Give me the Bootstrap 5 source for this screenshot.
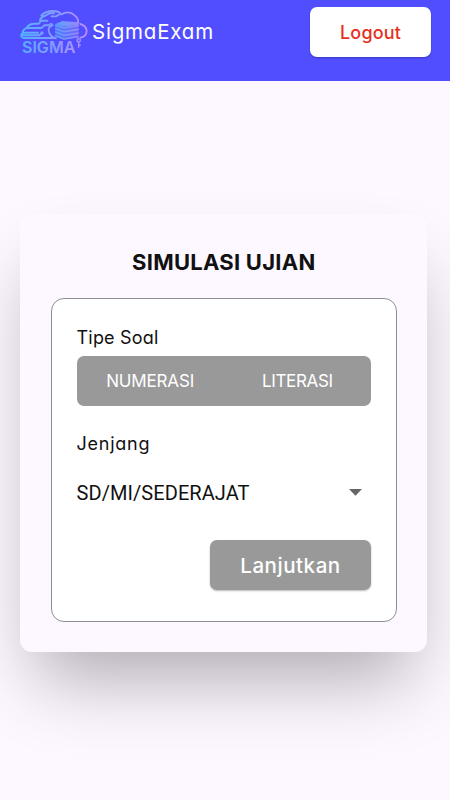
<!DOCTYPE html>
<html lang="id">
<head>
<meta charset="utf-8">
<meta name="viewport" content="width=device-width, initial-scale=1">
<title>SigmaExam</title>
<link href="https://cdn.jsdelivr.net/npm/bootstrap@5.3.0/dist/css/bootstrap.min.css" rel="stylesheet">
<style>
  body { background: #fdf7ff; font-family: Inter, "Open Sans", sans-serif; font-feature-settings: "cv11"; color: #111; height: 800px; overflow: hidden; }
  .topbar { height: 80.5px; background: #504eff; padding: 7px 19px 0 20px; }
  .brand-name { font-size: 20.5px; line-height: 50px; letter-spacing: .8px; margin-left: 4px; }
  .btn-flat { height: 50px; border: 0; border-radius: 7px; box-shadow: 0 1px 2px rgba(0,0,0,.28); }
  .btn-logout { width: 121px; background: #fff; color: #e5301f; font-size: 18px; font-weight: 500; letter-spacing: .15px; }
  .panel { margin: 133px 23px 0 20px; height: 438.5px; padding: 31.5px 30px 30px 30.5px; border-radius: 12px; background: #fdf7ff; box-shadow: 0 42px 70px -16px rgba(0,0,0,.31); }
  .panel-title { font-size: 22px; line-height: 35px; font-weight: 700; letter-spacing: .25px; margin: 0 0 17.5px; }
  .box { height: 324px; border: 1.3px solid #8f8f93; border-radius: 13px; background: #fff; padding: 25px 25px 0 25px; }
  .field-label { font-size: 18px; line-height: 28px; letter-spacing: .2px; }
  .field-label-wide { letter-spacing: .75px; }
  .types { height: 50px; border-radius: 7px; background: #999; font-size: 17px; margin: 4px 0 24px; padding-top: 2px; }
  .type-a { letter-spacing: -.15px; }
  .type-b { letter-spacing: -.35px; }
  .level { font: 400 20px/28px Roboto, sans-serif; letter-spacing: .07px; margin-top: 21px; padding-right: 9px; }
  .btn-next { width: 161px; margin-top: 33.5px; background: #999; color: #fff; font-size: 20.5px; font-weight: 500; letter-spacing: .55px; line-height: 52px; }
</style>
<script src="https://cdn.jsdelivr.net/npm/bootstrap@5.3.0/dist/js/bootstrap.bundle.min.js"></script>
</head>
<body>
<header class="topbar d-flex justify-content-between align-items-start">
  <div class="d-flex text-white">
    <svg width="68" height="54" viewBox="30 21 204 162" fill="none" stroke="url(#g)" stroke-width="6" stroke-linecap="round" stroke-linejoin="round">
      <defs>
        <linearGradient id="g" gradientUnits="userSpaceOnUse" x1="30" y1="0" x2="232" y2="0"><stop offset="0" stop-color="#52b2ff"/><stop offset=".5" stop-color="#829cff"/><stop offset="1" stop-color="#c08cff"/></linearGradient>
        <linearGradient id="b" gradientUnits="userSpaceOnUse" x1="134" y1="0" x2="208" y2="0"><stop offset="0" stop-color="#57a4fb"/><stop offset="1" stop-color="#9a86fb"/></linearGradient>
      </defs>
      <path d="M130 114H42Q32 113 34 104Q36 98 47 98H84M38 96Q43 84 54 84H94L104 76H118M50 83Q57 71 75 71H86L94 62H112M36 106H88L94 101M90 60Q94 49 106 47L118 40H132M94 46Q112 28 144 35L150 39"/>
      <path d="M124 49H138L150 42M128 75Q110 82 118 99Q124 112 138 115M154 43Q177 30 194 46Q206 56 204 66M211 72Q229 77 230 93Q229 110 212 113" stroke-width="5.5"/>
      <circle cx="123" cy="75" r="4" stroke-width="4"/><circle cx="96" cy="99" r="3" stroke-width="4"/>
      <path d="M135 73L157 63L209 67L205 74L162 80Z" fill="url(#b)" stroke="none"/>
      <path d="M136 74V108L162 118L205 111V74L162 81Z" fill="url(#b)" fill-opacity=".45" stroke="none"/>
      <path d="M137 76L162 84L205 77M137 86L162 95L205 88M137 96L162 106L205 99M137 107L162 117L205 110" stroke="url(#b)" stroke-width="5"/>
      <circle cx="206" cy="121" r="5" stroke-width="4"/><path d="M206 128V142M206 137L211 135" stroke-width="4"/>
      <text x="36" y="158" textLength="160" lengthAdjust="spacingAndGlyphs" font-family="Inter, sans-serif" font-size="48" font-weight="600" fill="url(#g)" stroke="none">SIGMA</text>
    </svg>
    <span class="brand-name">SigmaExam</span>
  </div>
  <button class="btn btn-flat btn-logout p-0">Logout</button>
</header>
<main class="panel">
  <h1 class="panel-title text-center">SIMULASI UJIAN</h1>
  <section class="box">
    <div class="field-label">Tipe Soal</div>
    <div class="types d-flex text-white text-center align-items-center">
      <div class="col-6 type-a">NUMERASI</div>
      <div class="col-6 type-b">LITERASI</div>
    </div>
    <div class="field-label field-label-wide">Jenjang</div>
    <div class="level d-flex justify-content-between align-items-center">
      <span>SD/MI/SEDERAJAT</span>
      <svg width="13" height="7" viewBox="0 0 13 7"><path d="M0 0H13L6.5 6.7Z" fill="#666"/></svg>
    </div>
    <div class="d-flex justify-content-end"><button class="btn btn-flat btn-next p-0">Lanjutkan</button></div>
  </section>
</main>
</body>
</html>
